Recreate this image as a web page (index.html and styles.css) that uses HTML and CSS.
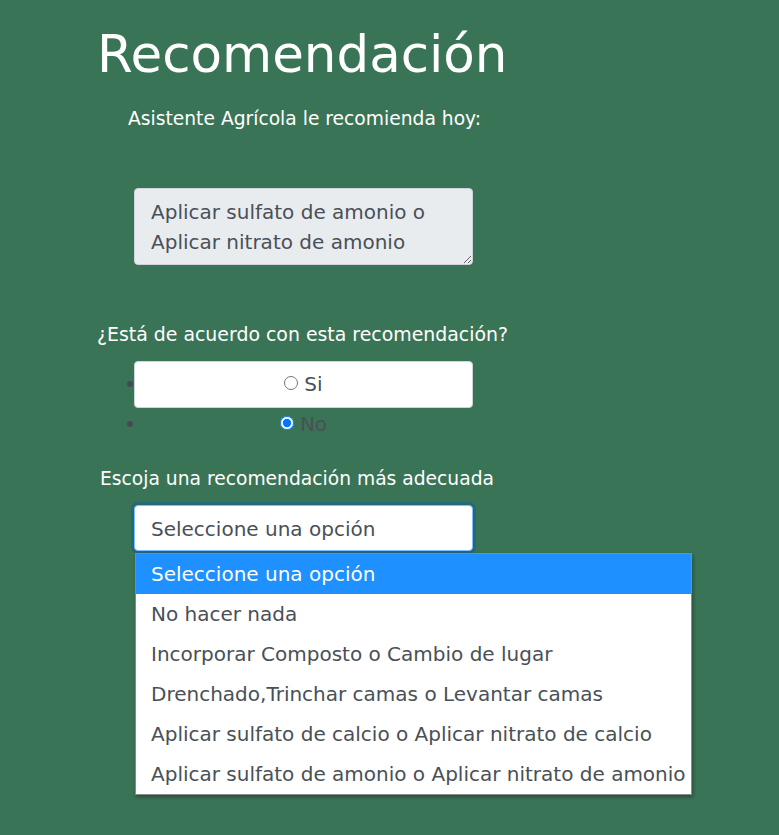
FILE: index.html
```html
<!DOCTYPE html>
<html lang="es">
<head>
<meta charset="utf-8">
<title>Recomendación</title>
<link rel="stylesheet" href="styles.css">
</head>
<body>
<main class="page">
  <h1 class="title">Recomendación</h1>
  <p class="intro">Asistente Agrícola le recomienda hoy:</p>
  <div class="rec-wrap">
    <textarea class="rec-box" readonly>Aplicar sulfato de amonio o Aplicar nitrato de amonio</textarea>
  </div>
  <p class="question">¿Está de acuerdo con esta recomendación?</p>
  <ul class="choices">
    <li class="choice boxed"><label><input class="radio" type="radio" name="agree">Si</label></li>
    <li class="choice"><label><input class="radio" type="radio" name="agree" checked>No</label></li>
  </ul>
  <p class="question2">Escoja una recomendación más adecuada</p>
  <div class="select-wrap">
    <div class="select">Seleccione una opción</div>
    <ul class="dropdown">
      <li class="opt active">Seleccione una opción</li>
      <li class="opt">No hacer nada</li>
      <li class="opt">Incorporar Composto o Cambio de lugar</li>
      <li class="opt">Drenchado,Trinchar camas o Levantar camas</li>
      <li class="opt">Aplicar sulfato de calcio o Aplicar nitrato de calcio</li>
      <li class="opt">Aplicar sulfato de amonio o Aplicar nitrato de amonio</li>
    </ul>
  </div>
</main>
</body>
</html>
```
FILE: styles.css
```css
html, body {
  margin: 0;
  padding: 0;
}
body {
  background: #3a7456;
  font-family: "DejaVu Sans", "Noto Sans", sans-serif;
  color: #fff;
  height: 835px;
  overflow: hidden;
}
.page {
  padding-left: 97px;
  padding-top: 22px;
}
.title {
  margin: 0;
  font-weight: 400;
  font-size: 51.5px;
  line-height: 64px;
}
.intro {
  margin: 21px 0 0 31px;
  font-size: 18.7px;
  line-height: 24px;
}
.rec-wrap {
  margin-top: 57px;
  padding-left: 37px;
  height: 77px;
}
.rec-box {
  display: block;
  box-sizing: border-box;
  width: 339px;
  height: 77px;
  margin: 0;
  background: #e9ecef;
  border: 1px solid #ced4da;
  border-radius: 4px;
  padding: 8px 16px;
  color: #495057;
  font-family: inherit;
  font-size: 20px;
  line-height: 30px;
  outline: none;
  overflow: hidden;
}
.question {
  margin: 57px 0 0 0;
  font-size: 18.9px;
  line-height: 24px;
}
.choices {
  margin: 15px 0 0 0;
  padding: 0 0 0 37px;
  list-style: none;
  color: #495057;
  width: 339px;
}
.choice {
  position: relative;
  box-sizing: border-box;
  text-align: center;
  font-size: 20px;
  line-height: 32px;
  height: 32px;
}
.choice::before {
  content: "";
  position: absolute;
  left: -7px;
  top: 13px;
  width: 6px;
  height: 6px;
  border-radius: 50%;
  background: #454a52;
}
.choice.boxed {
  background: #fff;
  border: 1px solid #ced4da;
  border-radius: 4px;
  height: 47px;
  line-height: 45px;
}
.choice.boxed::before {
  left: -8px;
  top: 19px;
}
.radio {
  width: 14px;
  height: 14px;
  margin: 0 6px 0 0;
  vertical-align: 1px;
}
.question2 {
  margin: 27px 0 0 3px;
  font-size: 18.7px;
  line-height: 24px;
}
.select-wrap {
  position: relative;
  margin-top: 14px;
  padding-left: 37px;
}
.select {
  box-sizing: border-box;
  width: 339px;
  height: 46px;
  background: #fff;
  border: 1px solid #80bdff;
  border-radius: 4px;
  box-shadow: 0 0 0 3px rgba(20, 95, 150, 0.55);
  padding: 2px 16px 0;
  color: #495057;
  font-size: 20px;
  line-height: 42px;
}
.dropdown {
  position: absolute;
  left: 38px;
  top: 48px;
  margin: 0;
  padding: 0;
  list-style: none;
  width: 555px;
  background: #fff;
  border: 1px solid #8a8a8a;
  box-shadow: 1px 2px 4px rgba(0, 0, 0, 0.35);
}
.opt {
  height: 40px;
  line-height: 40px;
  padding-left: 15px;
  font-size: 20px;
  color: #495057;
  white-space: nowrap;
}
.opt.active {
  background: #1e90ff;
  color: #fff;
}
```
